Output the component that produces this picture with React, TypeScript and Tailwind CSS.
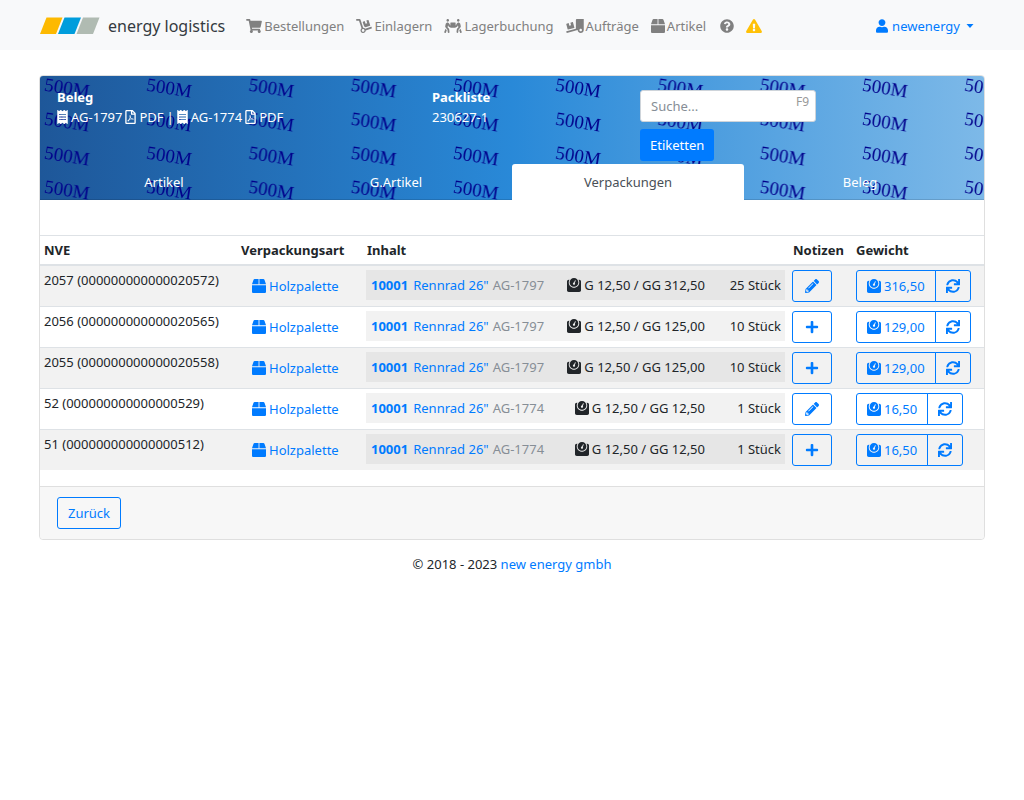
import type { ReactNode } from 'react';
import {
  FaShoppingCart,
  FaDolly,
  FaPeopleCarry,
  FaTruckLoading,
  FaBox,
  FaQuestionCircle,
  FaExclamationTriangle,
  FaUser,
  FaReceipt,
  FaRegFilePdf,
  FaWeight,
  FaPencilAlt,
  FaPlus,
  FaSync,
} from 'react-icons/fa';

const ICON = 'h-3.5 w-3.5 shrink-0';
const ICON_NARROW = 'h-3.5 w-[11px] shrink-0';
const ICON_MEDIUM = 'h-3.5 w-3 shrink-0';
const ICON_WIDE = 'h-3.5 w-4 shrink-0';
const ICON_WIDEST = 'h-3.5 w-[18px] shrink-0';
const OUTLINE =
  'inline-flex h-8 items-center justify-center gap-[3px] border border-[#007bff] px-2.5 text-[#007bff]';

type Row = {
  nve: string;
  code: string;
  order: string;
  weight: string;
  total: string;
  count: string;
  gross: string;
  note: boolean;
};

const rows: Row[] = [
  { nve: '2057', code: '000000000000020572', order: 'AG-1797', weight: '12,50', total: '312,50', count: '25', gross: '316,50', note: true },
  { nve: '2056', code: '000000000000020565', order: 'AG-1797', weight: '12,50', total: '125,00', count: '10', gross: '129,00', note: false },
  { nve: '2055', code: '000000000000020558', order: 'AG-1797', weight: '12,50', total: '125,00', count: '10', gross: '129,00', note: false },
  { nve: '52', code: '000000000000000529', order: 'AG-1774', weight: '12,50', total: '12,50', count: '1', gross: '16,50', note: true },
  { nve: '51', code: '000000000000000512', order: 'AG-1774', weight: '12,50', total: '12,50', count: '1', gross: '16,50', note: false },
];

function NavItem({ icon, label }: { icon: ReactNode; label: string }) {
  return (
    <a href="#" className="inline-flex items-center gap-0.5">
      {icon}
      <span>{label}</span>
    </a>
  );
}

function Navbar() {
  return (
    <nav className="flex h-[50px] items-center bg-[#f8f9fa] px-10 pt-px text-[#808080]">
      <a href="#" className="flex items-center gap-2 text-base text-[#343a40]">
        <svg className="h-[17px] w-[60px]" viewBox="0 0 60 17" aria-hidden="true">
          <path d="M6.500 0.500H22.500L16 17H0Z" fill="#fdb900" />
          <path d="M24.500 0.500H41L34.500 17H18Z" fill="#009ddc" />
          <path d="M43 0.500H59.500L53 17H36.500Z" fill="#b0bbb2" />
        </svg>
        <span>energy logistics</span>
      </a>
      <div className="ml-[21px] flex flex-1 items-center gap-3">
        <NavItem icon={<FaShoppingCart className={ICON_WIDE} />} label="Bestellungen" />
        <NavItem icon={<FaDolly className={ICON_WIDE} />} label="Einlagern" />
        <NavItem icon={<FaPeopleCarry className={ICON_WIDEST} />} label="Lagerbuchung" />
        <NavItem icon={<FaTruckLoading className={ICON_WIDEST} />} label="Aufträge" />
        <NavItem icon={<FaBox className={ICON} />} label="Artikel" />
        <a href="#" aria-label="Hilfe" className="ml-0.5">
          <FaQuestionCircle className={ICON} />
        </a>
        <a href="#" aria-label="Warnungen" className="text-[#ffc107]">
          <FaExclamationTriangle className={ICON_WIDE} />
        </a>
      </div>
      <button type="button" className="mr-2.5 inline-flex items-center gap-1 text-[#007bff]">
        <FaUser className={ICON_MEDIUM} />
        <span>newenergy</span>
        <svg className="ml-0.5 h-1 w-2" viewBox="0 0 8 4" aria-hidden="true">
          <path d="M0.500 0H7.500L4 4Z" fill="currentColor" />
        </svg>
      </button>
    </nav>
  );
}

function Watermark() {
  return (
    <svg className="absolute inset-0 h-full w-full" aria-hidden="true">
      <defs>
        <pattern id="roll-mark" width="102.25" height="34" patternUnits="userSpaceOnUse">
          <text
            className="font-['Liberation_Serif',serif] text-[19px]"
            fill="#00008b"
            transform="translate(3.500 14.500) rotate(9)"
          >
            500M
          </text>
        </pattern>
      </defs>
      <rect width="100%" height="100%" fill="url(#roll-mark)" />
    </svg>
  );
}

function DocLink({ name }: { name: string }) {
  return (
    <>
      <a href="#" className="inline-flex items-center gap-[3px]">
        <FaReceipt className={ICON_NARROW} />
        {name}
      </a>
      <a href="#" className="inline-flex items-center gap-[3px]">
        <FaRegFilePdf className={ICON_NARROW} />
        PDF
      </a>
    </>
  );
}

function CardHeader() {
  const tabs = ['Artikel', 'G.Artikel', 'Verpackungen', 'Beleg'];
  return (
    <header className="relative overflow-hidden rounded-t-[3px] bg-[linear-gradient(90deg,#1e5799_0%,#2989d8_50%,#7db9e8_100%)] text-white shadow-[inset_0_-1px_0_rgba(0,0,0,0.125)]">
      <Watermark />
      <div className="relative grid grid-cols-[375fr_208fr_344fr] pt-[11px] pl-[17px] leading-5">
        <div>
          <div className="font-bold">Beleg</div>
          <div className="flex items-center gap-[3px]">
            <DocLink name="AG-1797" />
            <span>|</span>
            <DocLink name="AG-1774" />
          </div>
        </div>
        <div>
          <div className="font-bold">Packliste</div>
          <div>230627-1</div>
        </div>
        <div className="flex flex-col items-start gap-[7px] pt-[3px]">
          <div className="relative w-44">
            <input
              type="search"
              aria-label="Suche"
              placeholder="Suche..."
              className="h-8 w-full rounded-[3px] border border-[#ced4da] bg-white px-2.5 text-[#495057] placeholder:text-[#868e96]"
            />
            <span className="absolute top-1 right-[7px] text-xs text-[#999]">F9</span>
          </div>
          <button type="button" className="h-8 rounded-[3px] bg-[#007bff] px-2.5">
            Etiketten
          </button>
        </div>
      </div>
      <div role="tablist" className="relative mt-[3px] grid grid-cols-4 px-2">
        {tabs.map((t) => (
          <button
            key={t}
            type="button"
            role="tab"
            aria-selected={t === 'Verpackungen'}
            className={
              t === 'Verpackungen'
                ? 'h-9 rounded-t-[3px] bg-white text-[#495057]'
                : 'h-9 text-white'
            }
          >
            {t}
          </button>
        ))}
      </div>
    </header>
  );
}

function PackageRow({ row, striped }: { row: Row; striped: boolean }) {
  return (
    <tr className={striped ? 'border-t border-[#dee2e6] bg-[#f2f2f2]' : 'border-t border-[#dee2e6] bg-white'}>
      <td className="p-1 align-top leading-5">
        {row.nve} ({row.code})
      </td>
      <td className="p-1 align-top">
        <a href="#" className="inline-flex h-8 items-center gap-[3px] px-[11px] text-[#007bff]">
          <FaBox className={ICON} />
          Holzpalette
        </a>
      </td>
      <td className="py-1 pr-1 pl-[3px] align-top">
        <div className={striped ? 'flex h-[30px] items-center bg-[#e6e6e6] pr-1 pl-[5px]' : 'flex h-[30px] items-center bg-[#f2f2f2] pr-1 pl-[5px]'}>
          <div className="flex flex-1 gap-1 text-[#868e96]">
            <a href="#" className="flex gap-[5px] text-[#007bff]">
              <b>10001</b>
              <span>Rennrad 26"</span>
            </a>
            <span>{row.order}</span>
          </div>
          <div className="flex items-center gap-[3px]">
            <FaWeight className={ICON} />
            G {row.weight} / GG {row.total}
          </div>
          <div className="w-[76px] text-right">{row.count} Stück</div>
        </div>
      </td>
      <td className="py-1 pr-1 pl-[3px] align-top">
        <button type="button" aria-label={row.note ? 'Notiz bearbeiten' : 'Notiz hinzufügen'} className={`${OUTLINE} w-10 rounded-[3px]`}>
          {row.note ? <FaPencilAlt className={ICON} /> : <FaPlus className={ICON} />}
        </button>
      </td>
      <td className="p-1 align-top">
        <div className="flex">
          <button type="button" className={`${OUTLINE} rounded-l-[3px]`}>
            <FaWeight className={ICON} />
            {row.gross}
          </button>
          <button type="button" aria-label="Gewicht aktualisieren" className={`${OUTLINE} -ml-px rounded-r-[3px]`}>
            <FaSync className={ICON} />
          </button>
        </div>
      </td>
    </tr>
  );
}

export default function App() {
  return (
    <div className="font-['Noto_Sans',sans-serif] text-[13px] leading-5 text-[#212529]">
      <Navbar />
      <main className="mx-[39px] mt-[25px] rounded border border-[#dfdfdf]">
        <CardHeader />
        <table className="mt-[35px] w-full table-fixed border-collapse">
          <colgroup>
            <col className="w-[197px]" />
            <col className="w-[126px]" />
            <col />
            <col className="w-[63px]" />
            <col className="w-[132px]" />
          </colgroup>
          <thead>
            <tr className="border-t border-b-2 border-[#dee2e6] text-left">
              <th className="p-1">NVE</th>
              <th className="p-1">Verpackungsart</th>
              <th className="p-1">Inhalt</th>
              <th className="p-1">Notizen</th>
              <th className="p-1">Gewicht</th>
            </tr>
          </thead>
          <tbody>
            {rows.map((r, i) => (
              <PackageRow key={r.nve} row={r} striped={i % 2 === 0} />
            ))}
          </tbody>
        </table>
        <footer className="mt-4 rounded-b border-t border-[#dfdfdf] bg-[#f7f7f7] px-[17px] py-2.5">
          <button type="button" className={`${OUTLINE} rounded-[3px]`}>
            Zurück
          </button>
        </footer>
      </main>
      <p className="mt-3.5 text-center">
        © 2018 - 2023{' '}
        <a href="#" className="text-[#007bff]">
          new energy gmbh
        </a>
      </p>
    </div>
  );
}
